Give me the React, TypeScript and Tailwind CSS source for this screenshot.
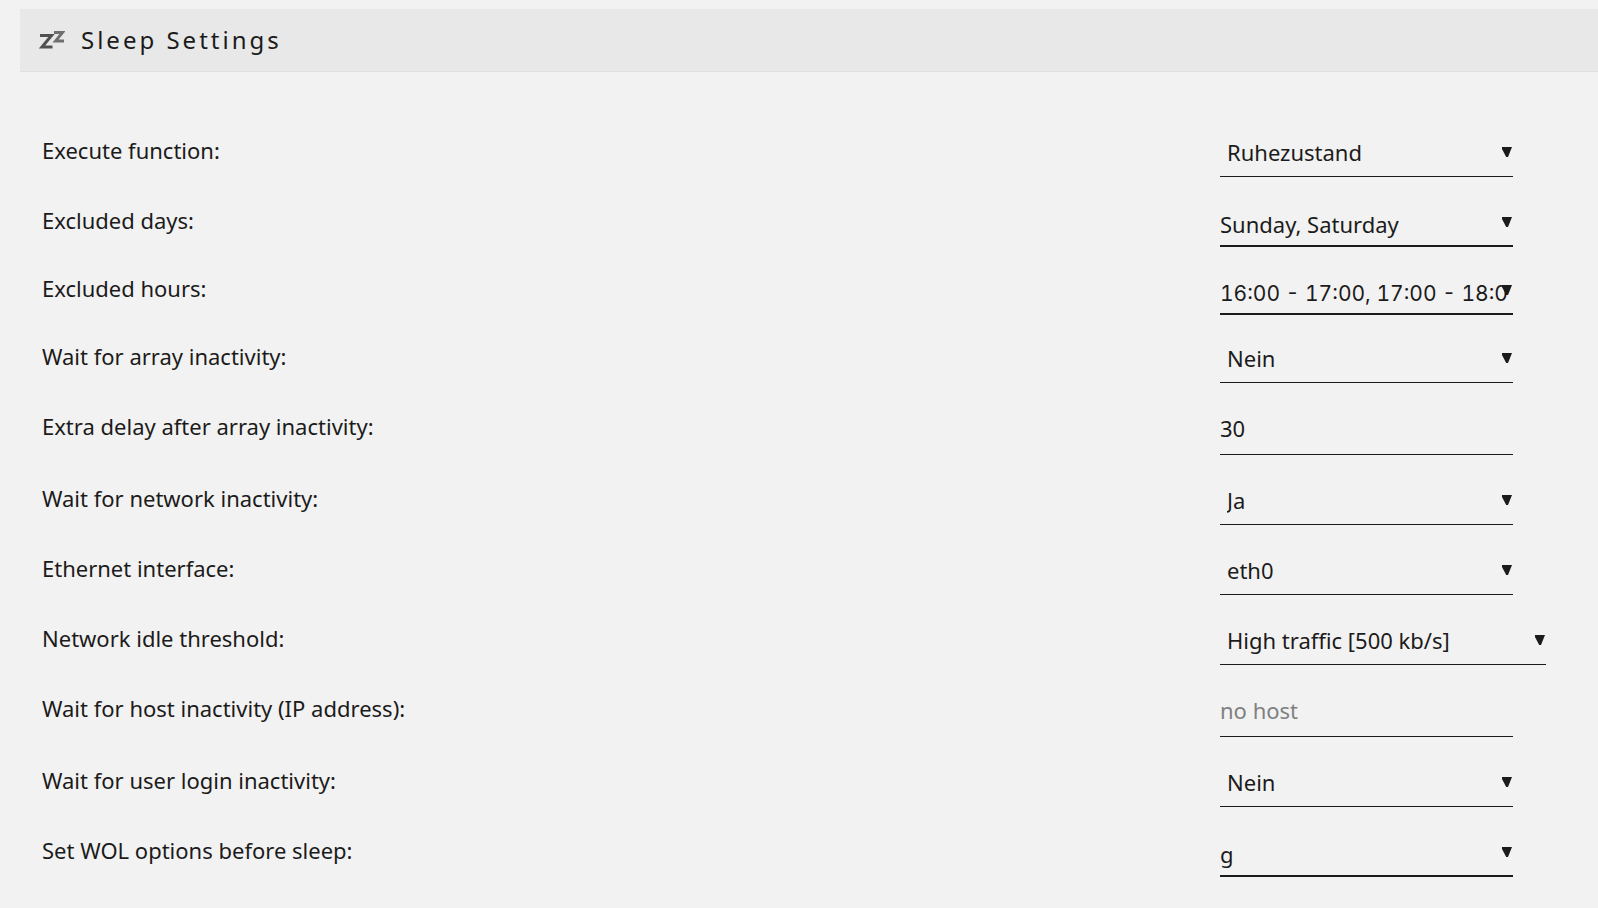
import { useId } from "react";

type Field =
  | { kind: "select"; label: string; options: string[]; wide?: boolean }
  | { kind: "multi"; label: string; value: string; numeric?: boolean }
  | { kind: "text"; label: string; value?: string; placeholder?: string };

const fields: Field[] = [
  { kind: "select", label: "Execute function:", options: ["Ruhezustand"] },
  { kind: "multi", label: "Excluded days:", value: "Sunday, Saturday" },
  { kind: "multi", label: "Excluded hours:", value: "16:00 - 17:00, 17:00 - 18:00", numeric: true },
  { kind: "select", label: "Wait for array inactivity:", options: ["Nein", "Ja"] },
  { kind: "text", label: "Extra delay after array inactivity:", value: "30" },
  { kind: "select", label: "Wait for network inactivity:", options: ["Ja", "Nein"] },
  { kind: "select", label: "Ethernet interface:", options: ["eth0"] },
  { kind: "select", label: "Network idle threshold:", options: ["High traffic [500 kb/s]"], wide: true },
  { kind: "text", label: "Wait for host inactivity (IP address):", placeholder: "no host" },
  { kind: "select", label: "Wait for user login inactivity:", options: ["Nein", "Ja"] },
  { kind: "multi", label: "Set WOL options before sleep:", value: "g" },
];

function Arrow() {
  return (
    <svg
      className="pointer-events-none absolute right-px top-[11px] h-[10px] w-[10px]"
      viewBox="0 0 10 10"
      aria-hidden="true"
    >
      <path d="M0 0H10L6 10H4.2L0 2Z" fill="#1c1b1b" />
    </svg>
  );
}

function SleepIcon() {
  return (
    <svg className="h-[20px] w-[26px]" viewBox="0 0 26 20" fill="none" aria-hidden="true">
      <path d="M1 5.5H12.5L3 17H13.5" stroke="#505050" strokeWidth="3" />
      <path d="M15 2.5H23.5L16.5 11H25" stroke="#6f6f6f" strokeWidth="2.8" />
    </svg>
  );
}

function Row({ field }: { field: Field }) {
  const id = useId();
  return (
    <div className={`grid grid-cols-[minmax(0,1fr)_378px] items-start ${field.kind === "multi" ? "mb-[27px]" : "mb-[29px]"}`}>
      <label htmlFor={id} className="leading-7">
        {field.label}
      </label>
      {field.kind === "select" && (
        <div className={`relative ${field.wide ? "w-[326px]" : "w-[293px]"}`}>
          <select
            id={id}
            className="block h-[41px] w-full appearance-none border-b border-[#1c1b1b] bg-transparent pb-[9px] pl-[7px] outline-none"
          >
            {field.options.map((option) => (
              <option key={option}>{option}</option>
            ))}
          </select>
          <Arrow />
        </div>
      )}
      {field.kind === "multi" && (
        <div className="relative w-[293px]">
          <button
            id={id}
            type="button"
            aria-haspopup="listbox"
            className="flex h-[41px] w-full items-start border-b-2 border-[#1c1b1b] pr-[6px] pt-[3px] text-left leading-[30px]"
          >
            <span
              className={`block w-full overflow-hidden whitespace-nowrap ${field.numeric ? "font-['Inter','Noto_Sans',sans-serif] text-[21px] leading-[34px] tabular-nums" : ""}`}
            >
              {field.value}
            </span>
          </button>
          <Arrow />
        </div>
      )}
      {field.kind === "text" && (
        <input
          id={id}
          type="text"
          defaultValue={field.value}
          placeholder={field.placeholder}
          className="block h-[43px] w-[293px] border-b border-[#1c1b1b] bg-transparent pb-[10px] outline-none placeholder:text-[#808080]"
        />
      )}
    </div>
  );
}

export default function App() {
  return (
    <main className="min-h-screen bg-[#f2f2f2] pl-5 pt-[9px] font-['Noto_Sans',sans-serif] text-[22px] text-[#1c1b1b]">
      <header className="flex h-[63px] items-center gap-4 border-b border-[#e0e0e0] bg-[#e8e8e8] pl-[19px]">
        <SleepIcon />
        <h1 className="text-2xl tracking-[3px]">Sleep Settings</h1>
      </header>
      <form className="pl-[22px] pt-16">
        {fields.map((field) => (
          <Row key={field.label} field={field} />
        ))}
      </form>
    </main>
  );
}
